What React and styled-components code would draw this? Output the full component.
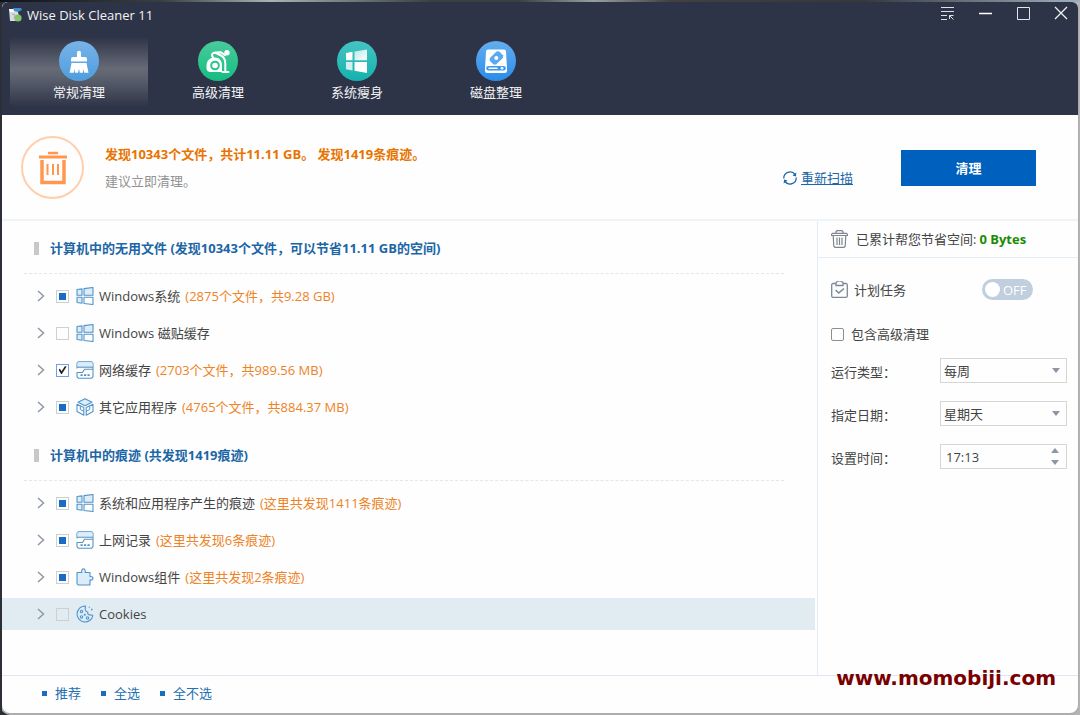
import React, {useEffect, useRef, useState} from 'react';
import styled, {createGlobalStyle} from 'styled-components';

const GlobalStyle = createGlobalStyle`
	* {
		box-sizing: border-box;
	}

	body {
		margin: 0;
		color: #444;
		font: 13px/20px 'Open Sans', 'Noto Sans CJK SC', sans-serif;
	}

	button, input, select {
		font: inherit;
		color: inherit;
	}

	button {
		padding: 0;
		border: 0;
		background: none;
	}

	svg {
		display: block;
		flex: none;
	}
`;

const Desktop = styled.div`
	display: flex;
	min-height: 100vh;
	padding: 2px;
	background:
		linear-gradient(90deg, #101418, #3a3f42 15%, #a9b4b1 25%, #3a3f42 40%, #3a3f42 48%, #98a09e 55%, #453f3f 62%, #35383c 80%, #9fb0bc) top / 100% 2px no-repeat,
		linear-gradient(90deg, #2c3036 50%, #b4b4b4 50%);
`;

const Window = styled.div`
	flex: 1;
	display: flex;
	flex-direction: column;
	min-width: 0;
	overflow: hidden;
	border-radius: 6px 6px 8px 8px;
	background: #fefefe;
	box-shadow: 0 1px 0 1px #adadad;
	clip-path: inset(0 -2px -2px 0);
`;

const Header = styled.header`
	height: 113px;
	background: #2e3447;
	color: #f2f3f5;
`;

const TitleBar = styled.div`
	display: flex;
	align-items: flex-start;
	height: 35px;
	padding-left: 6px;
`;

const AppTitle = styled.h1`
	flex: 1;
	display: flex;
	align-items: center;
	gap: 4px;
	margin: 0;
	padding-top: 3px;
	font-size: 13px;
	font-weight: 400;
`;

const WindowButtons = styled.div`
	display: flex;
	gap: 4px;
`;

const WindowButton = styled.button`
	display: grid;
	place-items: center;
	width: 34px;
	height: 22px;
`;

const Tabs = styled.nav`
	display: flex;
	gap: 1px;
	padding-left: 8px;
`;

const Tab = styled.button`
	display: flex;
	flex-direction: column;
	align-items: center;
	gap: 1px;
	width: 138px;
	height: 70px;
	padding-top: 4px;
	background: ${props => props.$active
		? 'linear-gradient(#2e3447, #666a77 45%, #5f6471 55%, #2e3447)'
		: 'none'};
`;

const Summary = styled.section`
	display: flex;
	align-items: center;
	height: 106px;
	padding: 0 42px 0 19px;
	border-bottom: 2px solid #eff4f8;
`;

const SummaryText = styled.div`
	flex: 1;
	padding-left: 21px;
`;

const Found = styled.p`
	margin: 0 0 7px;
	color: #e87400;
	font-weight: 700;
`;

const Advice = styled.p`
	margin: 0;
	color: #929292;
`;

const Actions = styled.div`
	display: flex;
	align-items: flex-end;
	gap: 48px;
	padding-top: 2px;
`;

const Rescan = styled.a`
	display: flex;
	align-items: center;
	gap: 4px;
	color: #1d67a8;
	line-height: 16px;
	text-decoration: none;

	span {
		text-decoration: underline;
	}
`;

const CleanButton = styled.button`
	width: 135px;
	height: 36px;
	background: #0060bd;
	color: #fff;
	font-weight: 700;
`;

const Body = styled.div`
	flex: 1;
	display: flex;
`;

const Main = styled.main`
	flex: 1;
	display: flex;
	flex-direction: column;
	gap: 5px;
	min-width: 0;
	padding-right: 2px;
`;

const GroupTitle = styled.h2`
	display: flex;
	align-items: center;
	gap: 11px;
	margin: 0 31px 6px 22px;
	padding: 17px 0 15px 10px;
	border-bottom: 1px dashed #e6e6e6;
	color: #1c66a6;
	font-size: 13px;
	line-height: 20px;

	&::before {
		content: '';
		width: 5px;
		height: 13px;
		background: #c8c8c8;
	}
`;

const List = styled.ul`
	display: grid;
	gap: 5px;
	margin: 0;
	padding: 0;
	list-style: none;
`;

const Row = styled.li`
	display: flex;
	align-items: center;
	height: 32px;
	padding-left: 34px;
	background: ${props => props.$selected ? '#e1ecf2' : 'none'};
`;

const Expand = styled.button`
	display: grid;
	place-items: center;
	width: 10px;
	height: 16px;
	margin-right: 10px;
`;

const RowLabel = styled.label`
	display: flex;
	align-items: center;
	gap: 5px;
	padding-left: 7px;
`;

const Note = styled.span`
	color: #ee8326;
`;

const Box = styled.input`
	appearance: none;
	flex: none;
	display: grid;
	place-items: center;
	width: 13px;
	height: 13px;
	margin: 0;
	border: 1px solid ${props => props.$dark ? '#8e8e8e' : '#cfcfcf'};
	border-radius: ${props => props.$dark ? '2px' : '0'};

	&:indeterminate::before {
		content: '';
		width: 7px;
		height: 7px;
		background: #1a6cc2;
	}

	&:checked {
		border-color: #6f9fee;
	}

	&:checked::before {
		content: '';
		width: 8px;
		height: 8px;
		background: #222;
		clip-path: polygon(0 45%, 18% 35%, 38% 65%, 82% 0, 100% 8%, 42% 100%, 32% 100%);
	}
`;

const Sidebar = styled.aside`
	width: 261px;
	border-left: 1px solid #e4ecf5;
`;

const Saved = styled.div`
	display: flex;
	align-items: center;
	gap: 8px;
	height: 37px;
	padding-left: 13px;
	border-bottom: 1px solid #e4ecf5;

	strong {
		margin-left: -5px;
		color: #1b8c00;
	}
`;

const Schedule = styled.form`
	padding: 21px 11px 0 13px;
`;

const TaskRow = styled.div`
	display: flex;
	align-items: center;
	justify-content: space-between;
	height: 21px;
	margin-bottom: 24px;
	padding-right: 34px;
`;

const TaskTitle = styled.label`
	display: flex;
	align-items: center;
	gap: 6px;
`;

const Toggle = styled.label`
	display: flex;
	align-items: center;
	gap: 3px;
	width: 51px;
	height: 21px;
	padding-left: 3px;
	border-radius: 11px;
	background: #c1cedd;
	color: #fff;

	input {
		appearance: none;
		width: 15px;
		height: 15px;
		margin: 0;
		border-radius: 50%;
		background: #fff;
	}
`;

const Include = styled.label`
	display: flex;
	align-items: center;
	gap: 7px;
	height: 20px;
	margin-bottom: 14px;
`;

const Field = styled.div`
	display: flex;
	align-items: center;
	justify-content: space-between;
	height: 25px;
	margin-bottom: 18px;

	> label {
		padding-top: 2px;
	}
`;

const Control = styled.div`
	display: flex;
	align-items: center;
	width: 127px;
	height: 25px;
	padding-right: 6px;
	border: 1px solid #d6d6d6;

	select, input {
		appearance: none;
		flex: 1;
		min-width: 0;
		height: 23px;
		padding: 0 0 0 ${props => props.$indent || 3}px;
		border: 0;
		background: none;
		outline: none;
	}
`;

const Spinner = styled.div`
	display: grid;
	gap: 7px;
	padding-right: 1px;
`;

const Footer = styled.footer`
	display: flex;
	gap: 20px;
	height: 38px;
	padding: 7px 0 0 40px;
	border-top: 1px solid #e0e5f0;
`;

const FooterLink = styled.a`
	display: flex;
	align-items: center;
	gap: 8px;
	height: 20px;
	color: #2470b0;
	text-decoration: none;

	&::before {
		content: '';
		width: 5px;
		height: 5px;
		background: #1a6cc2;
	}
`;

const Watermark = styled.div`
	position: absolute;
	right: 24px;
	bottom: 25px;
	color: #7a0000;
	font: bold 20px/24px 'DejaVu Sans', sans-serif;
`;

//Icons
const AppLogo = () => (
	<svg width="15" height="14" viewBox="0 0 15 14">
		<path d="M1 1h8l3 10-2 2H2z" fill="#d9dcdf" />
		<path d="M1 1h5v3H2z" fill="#fff" />
		<path d="M5 0h8l1 2-4 2-4-1z" fill="#3f8fd0" />
		<circle cx="10" cy="10" r="3.6" fill="#82c46c" />
		<path d="M4 6l3 1-1 4" fill="none" stroke="#a9adb2" />
	</svg>
);

const BroomIcon = () => (
	<svg width="40" height="40" viewBox="0 0 40 40">
		<defs>
			<linearGradient id="broom" x2="0" y2="1"><stop stopColor="#78b3e8" /><stop offset="1" stopColor="#4e9ddf" /></linearGradient>
		</defs>
		<circle cx="20" cy="20" r="20" fill="url(#broom)" />
		<path d="M18 16v-4.300a2 2 0 0 1 4 0V16h4a2 2 0 0 1 2 2v2.500H12V18a2 2 0 0 1 2-2z" fill="#fff" />
		<path d="M12.500 22h15l2 9.700h-4.200l-1.300-4v4h-3.200l-.8-4-1 4h-3v-4l-1.200 4h-4.200z" fill="#fff" />
	</svg>
);

const VacuumIcon = () => (
	<svg width="40" height="40" viewBox="0 0 40 40">
		<defs>
			<linearGradient id="vacuum" x2="0" y2="1"><stop stopColor="#4acb9b" /><stop offset="1" stopColor="#13bd81" /></linearGradient>
		</defs>
		<circle cx="20" cy="20" r="20" fill="url(#vacuum)" />
		<path d="M8.500 24.500c0-5 3.500-8 8-8 5 0 7.500 3.500 7.500 8V31H12.500a4 4 0 0 1-4-4z" fill="#fff" />
		<circle cx="17" cy="24.500" r="3.800" fill="none" stroke="#2ac48e" strokeWidth="2" />
		<path d="M15 16.500c-2.500-3.500.5-5.500 3-4.500l5 2.500c3 1.500 4.300 4.500 4.300 8V30M24.500 31h6M17.500 11.500l5.500-.300 4 3" fill="none" stroke="#fff" strokeWidth="2" strokeLinecap="round" />
		<circle cx="29" cy="11.700" r="2.700" fill="#fff" />
	</svg>
);

const SlimIcon = () => (
	<svg width="40" height="40" viewBox="0 0 40 40">
		<defs>
			<linearGradient id="slim" x2="0" y2="1"><stop stopColor="#45c5c2" /><stop offset="1" stopColor="#14b1ae" /></linearGradient>
			<linearGradient id="pane" x2="1" y2="1"><stop stopColor="#b9e8e7" /><stop offset="1" stopColor="#fff" /></linearGradient>
		</defs>
		<circle cx="20" cy="20" r="20" fill="url(#slim)" />
		<path d="M9 12l6.500-1.200v8.400H9z" fill="#fff" />
		<path d="M17.500 10.400L30 8.500v10.700H17.500z" fill="url(#pane)" />
		<path d="M9 21h6.500v8.400L9 28.200z" fill="#d3f0f0" />
		<path d="M17.500 21H30v11l-12.500-2.200z" fill="#fff" />
	</svg>
);

const DefragIcon = () => (
	<svg width="40" height="40" viewBox="0 0 40 40">
		<defs>
			<linearGradient id="defrag" x2="0" y2="1"><stop stopColor="#64aef0" /><stop offset="1" stopColor="#2a8ce9" /></linearGradient>
		</defs>
		<circle cx="20" cy="20" r="20" fill="url(#defrag)" />
		<path d="M12 8.500h16a2 2 0 0 1 2 2l1 17v2.500a2 2 0 0 1-2 2H11a2 2 0 0 1-2-2v-2.500l1-17a2 2 0 0 1 2-2z" fill="#fff" />
		<path d="M20.500 10.500l2.500-.2 4 3.900.1 2.600-7 6.700-2.600.1-3.800-3.800v-2.600z" fill="#5ca9ef" />
		<circle cx="20.300" cy="17" r="2" fill="#fff" />
		<path d="M12.500 27.200h15" fill="none" stroke="#3d97ec" strokeWidth="4.500" strokeLinecap="round" />
		<path d="M13 27.200h8" stroke="#fff" strokeWidth="1.500" strokeLinecap="round" />
		<circle cx="26" cy="27.200" r="1.400" fill="#fff" />
	</svg>
);

const BigTrash = () => (
	<svg width="63" height="63" viewBox="0 0 63 63" fill="none" stroke="#ff974f">
		<circle cx="31.500" cy="31.500" r="30.500" stroke="#ffcfad" strokeWidth="2" />
		<path d="M28 17h8" strokeWidth="2.500" strokeLinecap="round" />
		<path d="M18 21h28" strokeWidth="3" />
		<path d="M21 24v22.500h22V24" strokeWidth="3.500" />
		<path d="M26.500 28v11M32 28v11M37 28v11" strokeWidth="2" />
	</svg>
);

const RescanIcon = () => (
	<svg width="14" height="14" viewBox="0 0 14 14" fill="none" stroke="#1d67a8" strokeWidth="1.300">
		<path d="M.8 7.500A6.200 6.200 0 0 1 12 3.500M13.200 6.500A6.200 6.200 0 0 1 2 10.500" />
		<path d="M13.300 1.500l-.3 4-3.500-1zM.7 12.500l.3-4 3.500 1z" fill="#1d67a8" stroke="none" />
	</svg>
);

const SmallTrash = () => (
	<svg width="17" height="18" viewBox="0 0 17 18" fill="none" stroke="#7d858e" strokeWidth="1.200">
		<path d="M.5 5.500v-1.200l1-1h14l1 1v1.200zM5 3V1.600L6 .700h5l1 .9V3M2.200 5.500l.6 10.700 1.200 1.200h9l1.200-1.200.6-10.700M6 7.500v7.500M8.500 7.500v7.500M11 7.500v7.500" />
	</svg>
);

const TaskIcon = () => (
	<svg width="17" height="17" viewBox="0 0 17 17" fill="none" stroke="#7c8896" strokeWidth="1.300">
		<path d="M5 2.500H2A1.300 1.300 0 0 0 .700 3.800V15A1.300 1.300 0 0 0 2 16.300h13a1.300 1.300 0 0 0 1.300-1.300V3.800A1.300 1.300 0 0 0 15 2.500h-3M5 1.500V4.500h7V1.500a5 5 0 0 0-7 0" />
		<path d="M4.700 9l3 3 5.300-4.500" strokeWidth="1.600" />
	</svg>
);

const SmallSvg = ({children}) => (
	<svg width="18" height="18" viewBox="0 0 18 18" fill="#dcecf8" stroke="#5294c8" strokeWidth="1.100" strokeLinejoin="round">
		{children}
	</svg>
);

const icons = {
	windows: (
		<SmallSvg>
			<path d="M1 2.500l5-.6v6.300H1zM8 1.600l9-1.100v7.700H8zM1 10.200h5v6L1 15.500z" />
			<path d="M8 10.200h9v7.300l-9-1z" fill="#fff" />
		</SmallSvg>
	),
	network: (
		<SmallSvg>
			<path d="M1 7.500V2.300L2.300.800h13.400L17 2.300v13.400l-1.300 1.500H2.300L1 15.700V11.500h5.500l2-3.300H17" fill="none" />
			<path d="M1.500 1.500h15v4.500h-15z" stroke="none" />
			<path d="M1 6.200h16" />
			<path d="M4.500 14.200h9.500" fill="none" strokeWidth="1.800" strokeDasharray="2.200 1.300" />
		</SmallSvg>
	),
	cube: (
		<SmallSvg>
			<path d="M9 .700l7 3.500-7 3.500-7-3.500z" />
			<path d="M1 6.200l6.800 3.400v7.600L1 13.600zM17 6.200l-6.800 3.400v7.600l6.800-3.600z" fill="#fff" />
			<path d="M4.300 8v3.500l3.500 1.800M13.700 8v3.500l-3.500 1.800" fill="none" strokeWidth="1" />
		</SmallSvg>
	),
	puzzle: (
		<SmallSvg>
			<path d="M1 4.500h4.800c-1.200-5 4.400-5 3.400 0H14v4c4-.6 4 4.300 0 3.500V17H2.300L1 15.700z" />
		</SmallSvg>
	),
	cookie: (
		<SmallSvg>
			<path d="M9.500 1a8 8 0 1 0 7.400 9.500l-2.500-.8c-2 .6-3-.8-2.600-2.600C9.500 7 8.500 4.500 9.500 1z" />
			<circle cx="5.500" cy="6.500" r="1.200" />
			<circle cx="5.500" cy="12" r="1.200" />
			<circle cx="11.500" cy="13" r="1.200" />
			<circle cx="8.800" cy="9.800" r=".5" />
			<path d="M13 2l.5.500M15 4.500h1.500" strokeWidth="1.700" />
		</SmallSvg>
	)
};

const Arrow = ({up}) => (
	<svg width="8" height="5" viewBox="0 0 8 5">
		<path d={up ? 'M0 5l4-5 4 5z' : 'M0 0l4 5 4-5z'} fill="#8c96a4" />
	</svg>
);

const tabs = [
	{name: '常规清理', Icon: BroomIcon},
	{name: '高级清理', Icon: VacuumIcon},
	{name: '系统瘦身', Icon: SlimIcon},
	{name: '磁盘整理', Icon: DefragIcon}
];

const groups = [
	{
		title: '计算机中的无用文件 (发现10343个文件，可以节省11.11 GB的空间)',
		rows: [
			{name: 'Windows系统', note: '(2875个文件，共9.28 GB)', state: 'some', icon: 'windows'},
			{name: 'Windows 磁贴缓存', state: 'none', icon: 'windows'},
			{name: '网络缓存', note: '(2703个文件，共989.56 MB)', state: 'all', icon: 'network'},
			{name: '其它应用程序', note: '(4765个文件，共884.37 MB)', state: 'some', icon: 'cube'}
		]
	},
	{
		title: '计算机中的痕迹 (共发现1419痕迹)',
		rows: [
			{name: '系统和应用程序产生的痕迹', note: '(这里共发现1411条痕迹)', state: 'some', icon: 'windows'},
			{name: '上网记录', note: '(这里共发现6条痕迹)', state: 'some', icon: 'network'},
			{name: 'Windows组件', note: '(这里共发现2条痕迹)', state: 'some', icon: 'puzzle'},
			{name: 'Cookies', state: 'none', icon: 'cookie', selected: true}
		]
	}
];

const CleanRow = ({item, id}) => {
	const box = useRef(null);

	useEffect(() => {
		box.current.indeterminate = item.state === 'some';
	}, [item.state]);

	return (
		<Row $selected={item.selected}>
			<Expand type="button" aria-label={`展开 ${item.name}`}>
				<svg width="8" height="12" viewBox="0 0 8 12" fill="none" stroke="#8f99a5" strokeWidth="1.500">
					<path d="M1 1l5.500 5L1 11" />
				</svg>
			</Expand>
			<Box ref={box} id={id} type="checkbox" defaultChecked={item.state === 'all'} />
			<RowLabel htmlFor={id}>
				{icons[item.icon]}
				<span>{item.name}</span>
				{item.note && <Note>{item.note}</Note>}
			</RowLabel>
		</Row>
	);
};

const App = () => {
	const [active, setActive] = useState(0);

	return (
		<Desktop lang="zh-CN">
			<GlobalStyle />
			<Window>
				<Header>
					<TitleBar>
						<AppTitle><AppLogo />Wise Disk Cleaner 11</AppTitle>
						<WindowButtons>
							<WindowButton aria-label="菜单">
								<svg width="14" height="14" viewBox="0 0 14 14" fill="none" stroke="#dfe1e5">
									<path d="M1 1.500h13M1 5.500h13M1 9.500h6M1 13.500h6M13.500 13.500l-4-4M9.500 13V9.500h4" />
								</svg>
							</WindowButton>
							<WindowButton aria-label="最小化">
								<svg width="14" height="14" viewBox="0 0 14 14"><path d="M1 7.500h13" stroke="#fff" strokeWidth="1.400" /></svg>
							</WindowButton>
							<WindowButton aria-label="最大化">
								<svg width="14" height="14" viewBox="0 0 14 14"><path d="M1.500 1.500h12v12h-12z" fill="none" stroke="#e4e6e9" /></svg>
							</WindowButton>
							<WindowButton aria-label="关闭">
								<svg width="14" height="14" viewBox="0 0 14 14"><path d="M1 1l12 12M13 1L1 13" stroke="#f0f1f3" strokeWidth="1.300" /></svg>
							</WindowButton>
						</WindowButtons>
					</TitleBar>
					<Tabs>
						{tabs.map(({name, Icon}, index) => (
							<Tab key={name} $active={index === active} onClick={() => setActive(index)}>
								<Icon />
								{name}
							</Tab>
						))}
					</Tabs>
				</Header>
				<Summary>
					<BigTrash />
					<SummaryText>
						<Found>发现10343个文件，共计11.11 GB。 发现1419条痕迹。</Found>
						<Advice>建议立即清理。</Advice>
					</SummaryText>
					<Actions>
						<Rescan href="#rescan"><RescanIcon /><span>重新扫描</span></Rescan>
						<CleanButton>清理</CleanButton>
					</Actions>
				</Summary>
				<Body>
					<Main>
						{groups.map((group, groupIndex) => (
							<section key={group.title}>
								<GroupTitle>{group.title}</GroupTitle>
								<List>
									{group.rows.map((item, index) => (
										<CleanRow key={item.name} id={`item-${groupIndex}-${index}`} item={item} />
									))}
								</List>
							</section>
						))}
					</Main>
					<Sidebar>
						<Saved>
							<SmallTrash />
							<span>已累计帮您节省空间:</span>
							<strong>0 Bytes</strong>
						</Saved>
						<Schedule>
							<TaskRow>
								<TaskTitle htmlFor="task"><TaskIcon />计划任务</TaskTitle>
								<Toggle><input id="task" type="checkbox" role="switch" />OFF</Toggle>
							</TaskRow>
							<Include><Box $dark type="checkbox" />包含高级清理</Include>
							<Field>
								<label htmlFor="type">运行类型：</label>
								<Control>
									<select id="type"><option>每周</option></select>
									<Arrow />
								</Control>
							</Field>
							<Field>
								<label htmlFor="day">指定日期：</label>
								<Control>
									<select id="day"><option>星期天</option></select>
									<Arrow />
								</Control>
							</Field>
							<Field>
								<label htmlFor="time">设置时间：</label>
								<Control $indent={5}>
									<input id="time" type="text" defaultValue="17:13" />
									<Spinner>
										<button type="button" aria-label="增加"><Arrow up /></button>
										<button type="button" aria-label="减少"><Arrow /></button>
									</Spinner>
								</Control>
							</Field>
						</Schedule>
					</Sidebar>
				</Body>
				<Footer>
					<FooterLink href="#recommended">推荐</FooterLink>
					<FooterLink href="#all">全选</FooterLink>
					<FooterLink href="#none">全不选</FooterLink>
				</Footer>
			</Window>
			<Watermark>www.momobiji.com</Watermark>
		</Desktop>
	);
};

export default App;
